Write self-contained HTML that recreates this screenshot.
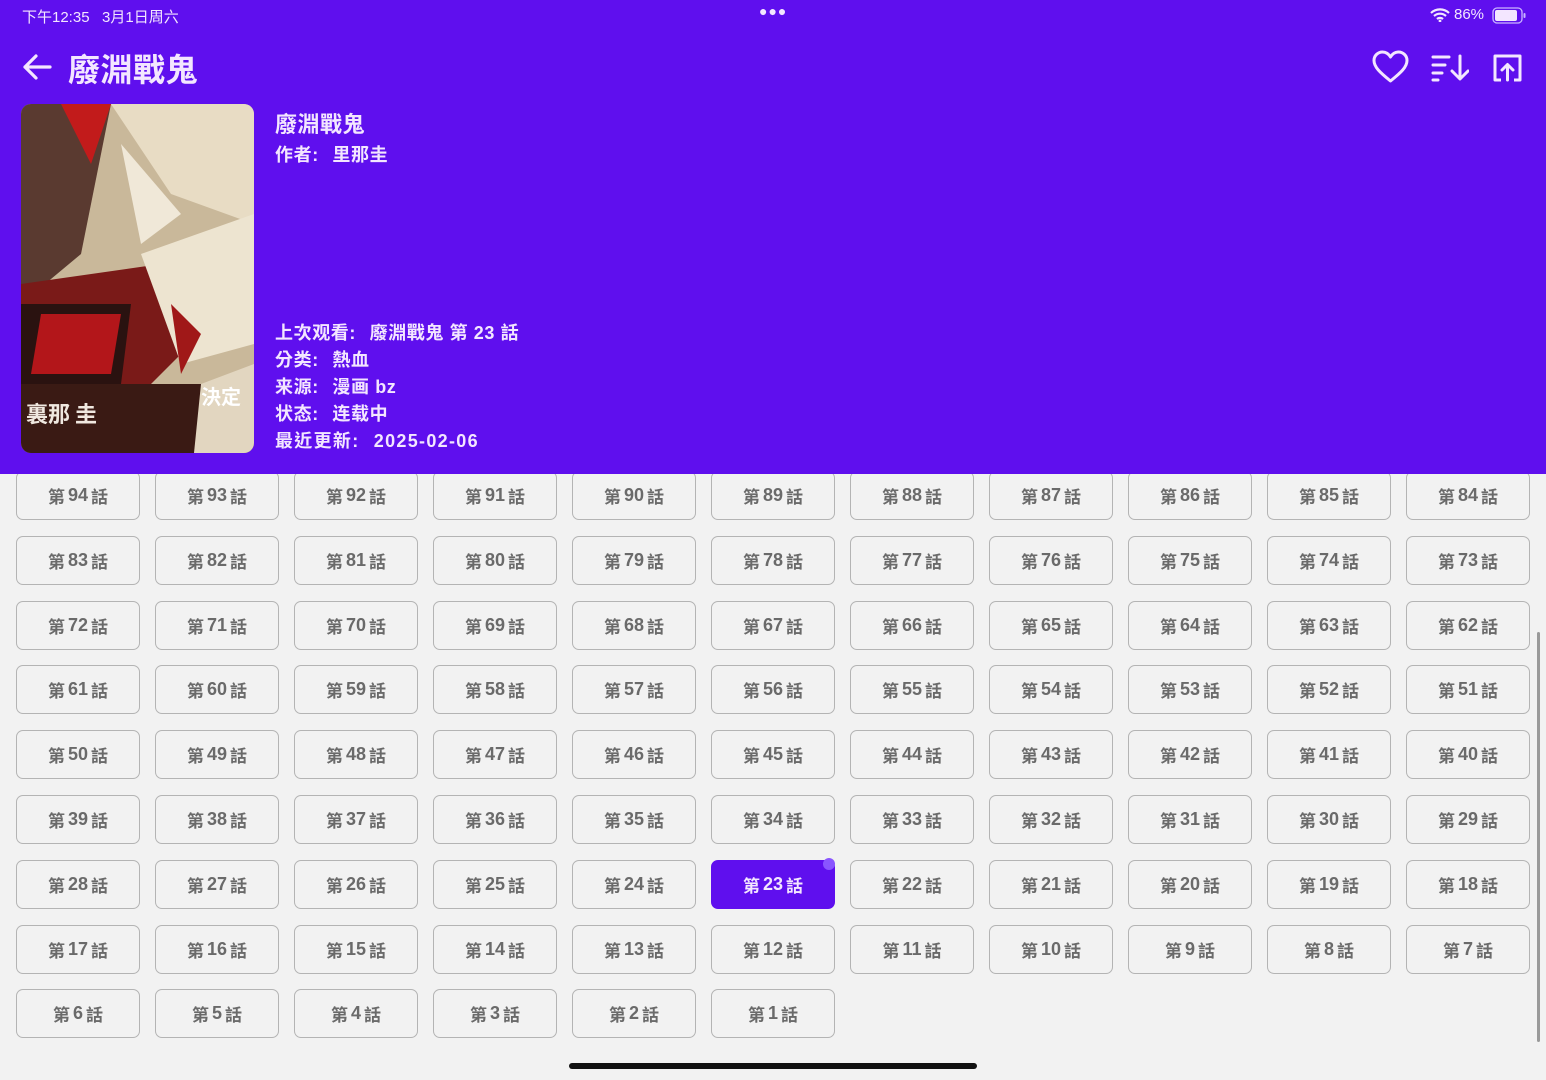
<!DOCTYPE html>
<html><head><meta charset="utf-8"><style>
*{margin:0;padding:0;box-sizing:border-box}
body{width:1546px;height:1080px;overflow:hidden;background:#f2f2f2;font-family:"Liberation Sans","Noto Sans CJK TC",sans-serif;position:relative}
.hdr{position:absolute;left:0;top:0;width:1546px;height:474px;background:#5f0fee;color:#f3e6ff;z-index:2}
.t{position:absolute;white-space:nowrap}
.btn{position:absolute;width:124px;height:49px;border:1.5px solid #b4b4b4;border-radius:7px;background:#f2f2f2;color:#6a6a6a;font-weight:bold;font-size:17px;display:flex;align-items:center;justify-content:center;font-family:"Liberation Sans","Noto Sans CJK TC",sans-serif}
.btn b{margin:0 3px;font-size:18px}
.btn.sel{background:#5f0fee;border-color:#5f0fee;color:#f3e6ff}
.info{font-size:18px;font-weight:bold;letter-spacing:0.6px}
.info span{margin-right:8px}
</style></head><body>
<div class="hdr">
 <div class="t" style="left:22px;top:6px;font-size:15px">下午12:35&nbsp;&nbsp;&nbsp;3月1日周六</div>
 <div class="t" style="left:759px;top:3px;font-size:14px;letter-spacing:1px">●●●</div>
 <div class="t" style="left:1454px;top:6px;font-size:15px">86%</div>
 <svg class="t" style="left:1430px;top:8px" width="20" height="14" viewBox="0 0 20 14"><path d="M1 5a13 13 0 0 1 18 0M4 8a9 9 0 0 1 12 0M7 11a4.5 4.5 0 0 1 6 0" stroke="#f3e6ff" stroke-width="2.2" fill="none"/><circle cx="10" cy="13" r="1.4" fill="#f3e6ff"/></svg>
 <svg class="t" style="left:1492px;top:7px" width="34" height="17" viewBox="0 0 34 17"><rect x="1" y="1" width="29" height="15" rx="4" stroke="#c9b5ff" stroke-width="1.3" fill="none"/><rect x="3" y="3" width="22" height="11" rx="2" fill="#f3e6ff"/><rect x="31.5" y="6" width="2" height="5" rx="1" fill="#c9b5ff"/></svg>
 <svg class="t" style="left:22px;top:53px" width="30" height="28" viewBox="0 0 30 28"><path d="M28 14H3M14 3L3 14l11 11" stroke="#f3e6ff" stroke-width="3.2" fill="none" stroke-linecap="round" stroke-linejoin="round"/></svg>
 <div class="t" style="left:68px;top:45px;font-size:32px;font-weight:bold;letter-spacing:0.5px">廢淵戰鬼</div>
 <svg class="t" style="left:1372px;top:50px" width="37" height="34" viewBox="0 0 37 34"><path d="M18.5 31C8 22.5 2 17 2 10.5 2 5.5 6 2 10.5 2c3.5 0 6.2 2 8 5 1.8-3 4.5-5 8-5C31 2 35 5.5 35 10.5 35 17 29 22.5 18.5 31z" stroke="#f3e6ff" stroke-width="3" fill="none" stroke-linejoin="round"/></svg>
 <svg class="t" style="left:1431px;top:54px" width="38" height="28" viewBox="0 0 38 28"><path d="M2 3h16M2 11h12M2 19h9M2 26h5M29 2v22M21 17l8 8 8-8" stroke="#f3e6ff" stroke-width="3" fill="none" stroke-linecap="round" stroke-linejoin="round"/></svg>
 <svg class="t" style="left:1492px;top:53px" width="31" height="29" viewBox="0 0 31 29"><path d="M9 27H3V3h25v24h-6" stroke="#f3e6ff" stroke-width="3" fill="none" stroke-linejoin="round"/><path d="M15.5 27V12M10 17l5.5-5.5L21 17" stroke="#f3e6ff" stroke-width="3" fill="none" stroke-linecap="round" stroke-linejoin="round"/></svg>
 <svg class="t" style="left:21px;top:104px;border-radius:10px" width="233" height="349" viewBox="0 0 233 349">
  <rect width="233" height="349" fill="#c9b89a"/>
  <path d="M0 0h90L60 150 0 200z" fill="#5a3a30"/>
  <path d="M40 0l30 60 20-60z" fill="#c21b1b"/>
  <path d="M90 0h143v120L150 90z" fill="#e8dcc4"/>
  <path d="M0 180l140-20 40 70-60 60L0 300z" fill="#7a1a18"/>
  <path d="M0 200h110l-10 80H0z" fill="#2a1210"/>
  <path d="M20 210h80l-10 60H10z" fill="#b3161a"/>
  <path d="M120 150l113-40v130L160 260z" fill="#ede4d0"/>
  <path d="M0 280h233v69H0z" fill="#3a1a14"/>
  <path d="M180 280l53-20v89h-60z" fill="#e2d6c0"/>
  <path d="M100 40l60 70-40 30z" fill="#f0e8d8"/>
  <path d="M150 200l30 30-20 40z" fill="#a01818"/>
  <text x="5" y="318" font-size="22" font-weight="bold" fill="#f0e8e0" font-family="Noto Sans CJK TC,sans-serif">裏那 圭</text>
  <text x="180" y="300" font-size="20" font-weight="bold" fill="#fff" font-family="Noto Sans CJK TC,sans-serif">決定</text>
 </svg>
 <div class="t" style="left:275px;top:107px;font-size:22px;font-weight:bold;letter-spacing:0.5px">廢淵戰鬼</div>
 <div class="t info" style="left:275px;top:141px"><span>作者:</span> 里那圭</div>
 <div class="t info" style="left:275px;top:319px"><span>上次观看:</span> 廢淵戰鬼 第 23 話</div>
 <div class="t info" style="left:275px;top:346px"><span>分类:</span> 熱血</div>
 <div class="t info" style="left:275px;top:373px"><span>来源:</span> 漫画 bz</div>
 <div class="t info" style="left:275px;top:400px"><span>状态:</span> 连载中</div>
 <div class="t info" style="left:275px;top:427px;letter-spacing:1.3px"><span>最近更新:</span> 2025-02-06</div>
</div>
<div id="g"></div>
<div style="position:absolute;left:1537px;top:632px;width:3px;height:410px;background:#9a9a9a;border-radius:2px"></div>
<div style="position:absolute;left:569px;top:1063px;width:408px;height:6px;background:#111;border-radius:3px"></div>
<script>
var h='';
for(var n=94,i=0;n>=1;n--,i++){var r=Math.floor(i/11),c=i%11;
h+='<div class="btn'+(n==23?' sel':'')+'" style="left:'+(16+c*139)+'px;top:'+(471+r*64.8)+'px">第<b>'+n+'</b>話</div>';}
document.getElementById('g').innerHTML=h;
</script>
<div style="position:absolute;left:823px;top:858px;width:12px;height:12px;border-radius:6px;background:#8a55ff"></div>
</body></html>
